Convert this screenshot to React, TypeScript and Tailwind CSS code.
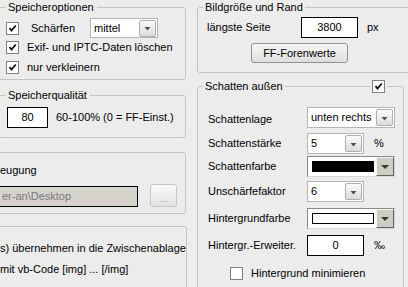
import React from 'react';

function Check({ checked }: { checked?: boolean }) {
  return (
    <span className="w-[13px] h-[13px] shrink-0 border border-[#808080] bg-white flex items-center justify-center">
      {checked && (
        <svg width="9" height="9" viewBox="0 0 9 9">
          <path d="M1.5 4 L3.5 6.5 L7.8 1.5" stroke="#111" strokeWidth="1.8" fill="none" />
        </svg>
      )}
    </span>
  );
}

function DropBtn() {
  return (
    <span className="w-[17px] h-[17px] shrink-0 rounded-[2px] border border-[#a9b0b8] bg-linear-to-b from-[#fafafa] to-[#dcdcdc] flex items-center justify-center pt-[2px]">
      <svg width="7" height="4" viewBox="0 0 7 4">
        <path d="M0.5 0 H6.5 L3.5 3.5 Z" fill="#505050" />
      </svg>
    </span>
  );
}

function Select({ value, className }: { value: string; className: string }) {
  return (
    <div className={`${className} shrink-0 border border-[#b5b5b5] bg-white flex items-center justify-between pl-[3px] pr-[1px]`}>
      <span>{value}</span>
      <DropBtn />
    </div>
  );
}

function ColorCombo({ color }: { color: string }) {
  return (
    <div className="w-[88px] h-[21px] shrink-0 border border-t-[#8a8a8a] border-l-[#8a8a8a] border-b-[#d8d8d8] border-r-[#d8d8d8] bg-white flex items-center justify-between pl-[4px]">
      <span className="w-[62px] h-[11px] border border-black" style={{ backgroundColor: color }} />
      <span className="w-[18px] h-[19px] bg-[#cfccc6] border border-t-[#f4f4f4] border-l-[#f4f4f4] border-b-[#606060] border-r-[#606060] flex items-center justify-center">
        <svg width="8" height="4" viewBox="0 0 8 4">
          <path d="M0 0 H8 L4 4 Z" fill="#3a3a3a" />
        </svg>
      </span>
    </div>
  );
}

function TextBox({ value, className }: { value: string; className: string }) {
  return (
    <div className={`${className} shrink-0 border border-black bg-white flex items-center justify-center`}>
      {value}
    </div>
  );
}

export default function App() {
  return (
    <div className="w-[408px] h-[287px] overflow-hidden whitespace-nowrap bg-[#ececec] text-[11px] leading-[13px] text-black flex gap-[11px] font-['Liberation_Sans',Arial,sans-serif]">
      {/* left column */}
      <div className="-ml-[2px] w-[188px] shrink-0 flex flex-col pt-[1px]">
        <fieldset className="shrink-0 h-[79px] border border-[#c4c4c4] rounded-[3px]">
          <legend className="ml-[6px] px-[3px]">Speicheroptionen</legend>
          <div className="pt-[4px] pl-[7px]">
            <div className="h-[20px] flex items-center">
              <Check checked />
              <span className="ml-[12px] w-[59px]">Schärfen</span>
              <Select value="mittel" className="w-[68px] h-[20px]" />
            </div>
            <div className="h-[19px] flex items-center">
              <Check checked />
              <span className="ml-[8px]">Exif- und IPTC-Daten löschen</span>
            </div>
            <div className="h-[20px] flex items-center">
              <Check checked />
              <span className="ml-[8px]">nur verkleinern</span>
            </div>
          </div>
        </fieldset>

        <fieldset className="shrink-0 mt-[9px] h-[49px] border border-[#c4c4c4] rounded-[3px]">
          <legend className="ml-[6px] px-[3px]">Speicherqualität</legend>
          <div className="pt-[5px] pl-[8px] flex items-center">
            <TextBox value="80" className="w-[41px] h-[21px]" />
            <span className="ml-[8px]">60-100% (0 = FF-Einst.)</span>
          </div>
        </fieldset>

        <fieldset className="shrink-0 mt-[14px] h-[62px] border border-[#c4c4c4] rounded-[3px]">
          <div className="pt-[11px] pl-[1px]">eugung</div>
          <div className="mt-[7px] h-[23px] flex items-end">
            <div className="w-[139px] h-[21px] border border-black bg-[#d6d3cd] text-[#7a7a7a] flex items-center pl-[2px]">
              er-an\Desktop
            </div>
            <div className="ml-[12px] w-[27px] h-[23px] rounded-[3px] border border-[#c6c6c6] bg-linear-to-b from-[#fbfbfb] to-[#e2e2e2] text-[#a8a8a8] flex items-center justify-center pt-[5px]">
              ...
            </div>
          </div>
        </fieldset>

        <fieldset className="shrink-0 mt-[12px] h-[80px] border border-[#c4c4c4] rounded-[3px]">
          <div className="pt-[15px] pl-[1px]">s) übernehmen in die Zwischenablage</div>
          <div className="mt-[8px] pl-[1px]">mit vb-Code [img] ... [/img]</div>
        </fieldset>
      </div>

      {/* right column */}
      <div className="w-[230px] shrink-0 flex flex-col pt-[1px]">
        <fieldset className="shrink-0 h-[72px] border border-[#c4c4c4] rounded-[3px]">
          <legend className="ml-[5px] px-[2px]">Bildgröße und Rand</legend>
          <div className="pt-[3px] pl-[9px]">
            <div className="h-[21px] flex items-center">
              <span className="w-[94px]">längste Seite</span>
              <TextBox value="3800" className="w-[57px] h-[21px]" />
              <span className="ml-[9px]">px</span>
            </div>
            <button className="mt-[5px] ml-[44px] w-[97px] h-[20px] rounded-[3px] border border-[#8f9297] bg-linear-to-b from-[#f7f7f7] to-[#dedede] flex items-center justify-center font-normal">
              FF-Forenwerte
            </button>
          </div>
        </fieldset>

        <div className="relative shrink-0 mt-[7px]">
          <fieldset className="w-[207px] h-[220px] border border-[#c4c4c4] rounded-[3px]">
            <legend className="ml-[5px] px-[2px]">Schatten außen</legend>
            <div className="pt-[14px] pl-[10px]">
              <div className="h-[21px] flex items-center">
                <span className="w-[99px] pt-[3px]">Schattenlage</span>
                <Select value="unten rechts" className="w-[88px] h-[21px]" />
              </div>
              <div className="mt-[5px] h-[21px] flex items-center">
                <span className="w-[99px]">Schattenstärke</span>
                <Select value="5" className="w-[57px] h-[21px]" />
                <span className="ml-[10px]">%</span>
              </div>
              <div className="mt-[2px] h-[21px] flex items-center">
                <span className="w-[99px]">Schattenfarbe</span>
                <ColorCombo color="#000000" />
              </div>
              <div className="mt-[4px] h-[21px] flex items-center">
                <span className="w-[99px]">Unschärfefaktor</span>
                <Select value="6" className="w-[57px] h-[21px]" />
              </div>
              <div className="mt-[6px] h-[21px] flex items-center">
                <span className="w-[99px]">Hintergrundfarbe</span>
                <ColorCombo color="#ffffff" />
              </div>
              <div className="mt-[6px] h-[21px] flex items-center">
                <span className="w-[99px]">Hintergr.-Erweiter.</span>
                <TextBox value="0" className="w-[57px] h-[21px]" />
                <span className="ml-[10px]">‰</span>
              </div>
              <div className="mt-[11px] h-[13px] flex items-center">
                <span className="ml-[22px]">
                  <Check />
                </span>
                <span className="ml-[8px]">Hintergrund minimieren</span>
              </div>
            </div>
          </fieldset>
          <span className="absolute left-[173px] top-0 px-[2px] bg-[#ececec]">
            <Check checked />
          </span>
        </div>
      </div>
    </div>
  );
}
